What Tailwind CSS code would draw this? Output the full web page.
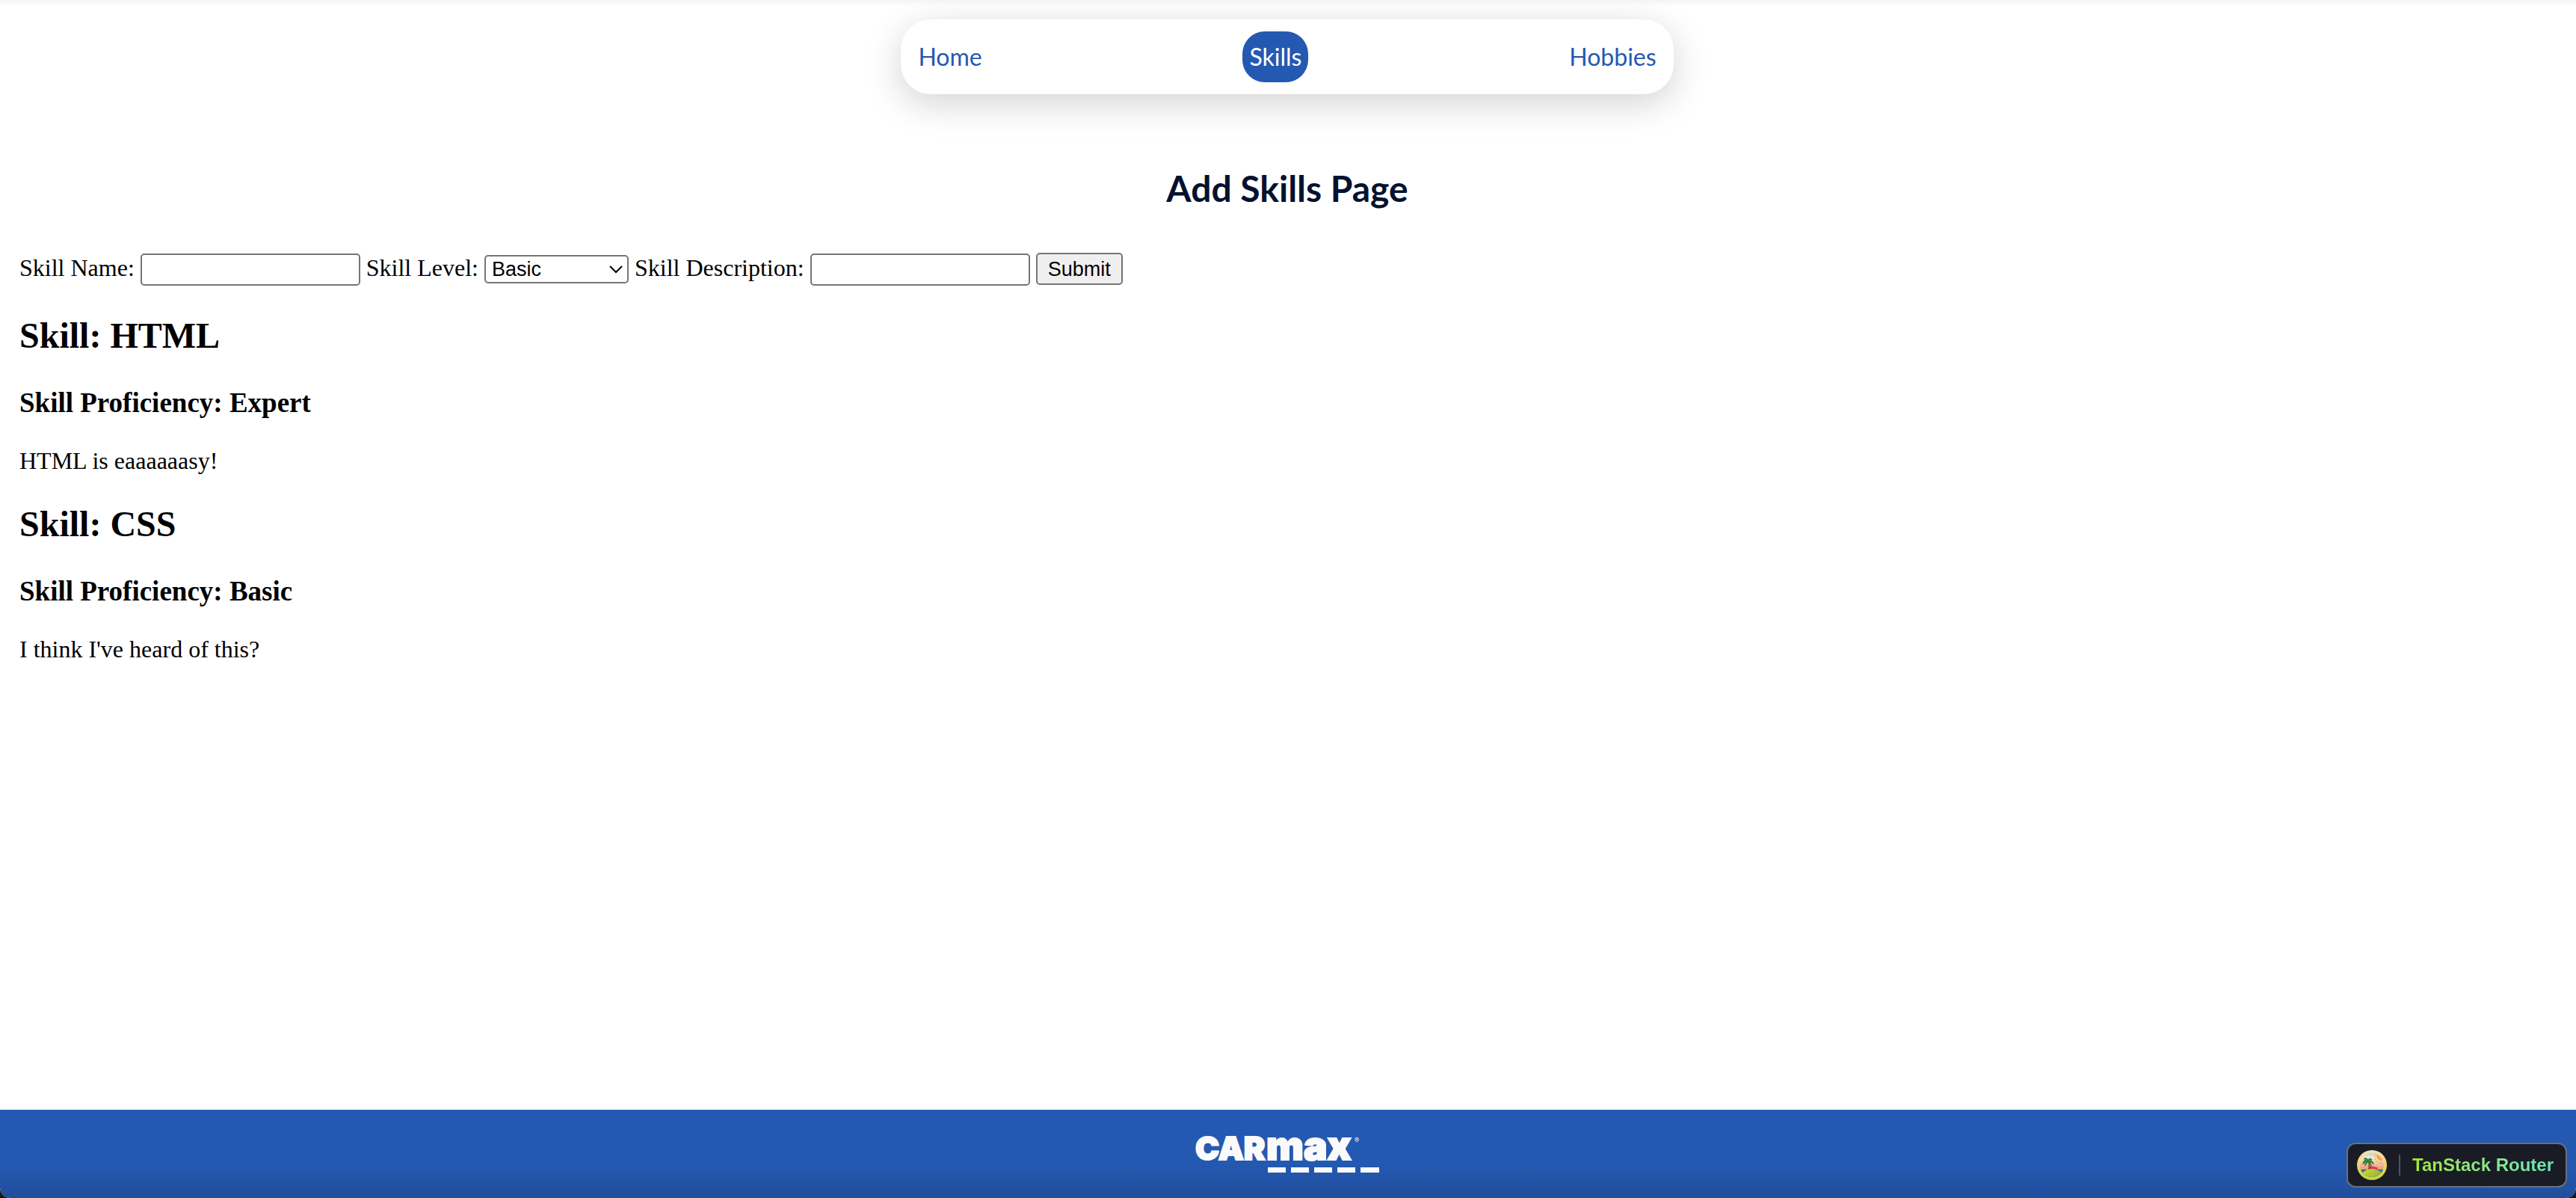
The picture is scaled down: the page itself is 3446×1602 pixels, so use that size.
<!DOCTYPE html>
<html lang="en">
<head>
<meta charset="utf-8">
<title>Skills</title>
<script src="https://cdn.jsdelivr.net/npm/@tailwindcss/browser@4"></script>
</head>
<body class="bg-[#15171a]">
<div class="relative flex min-h-screen flex-col overflow-hidden rounded-b-[14px] bg-white font-['Liberation_Serif',serif] text-[32px] leading-9 text-black">
  <div class="absolute inset-x-0 top-0 h-2 bg-linear-to-b from-black/4 to-transparent"></div>
  <header class="flex justify-center pt-[26px] pr-0.5">
    <nav class="flex w-[30%] min-w-[500px] items-center justify-between rounded-[40px] bg-white px-[14px] py-4 font-[Lato,sans-serif] leading-[68px] text-[#2459b2] shadow-[0_12px_48px_rgba(0,10,5,0.18)]">
      <a href="#home" class="rounded-[30px] px-[9px]">Home</a>
      <a href="#skills" class="rounded-[30px] bg-[#2459b2] px-[9px] text-white">Skills</a>
      <a href="#hobbies" class="rounded-[30px] px-[9px]">Hobbies</a>
    </nav>
  </header>
  <main class="flex-1 px-[26px]">
    <h1 class="mt-24 pr-0.5 text-center font-[Lato,sans-serif] text-5xl leading-[60px] font-bold text-[#04122f]">Add Skills Page</h1>
    <form class="mt-14 flex flex-wrap items-baseline gap-2">
      <label for="name">Skill Name:</label>
      <input id="name" type="text" class="h-[43px] w-[294px] rounded-[5px] border-2 border-[#767676] bg-white px-1 font-['Liberation_Sans',sans-serif] text-[27px] leading-8">
      <label for="level">Skill Level:</label>
      <span class="relative flex">
        <select id="level" class="h-[38px] w-[193px] appearance-none rounded-[5px] border-2 border-[#767676] bg-white px-2 font-['Liberation_Sans',sans-serif] text-[27px] leading-8"><option>Basic</option><option>Intermediate</option><option>Expert</option></select>
        <svg class="pointer-events-none absolute top-3 right-2 h-4 w-[18px]" viewBox="0 0 18 16" fill="none" stroke="#000" stroke-width="2"><path d="M1 3l8 8 8-8"/></svg>
      </span>
      <label for="description">Skill Description:</label>
      <input id="description" type="text" class="h-[43px] w-[294px] rounded-[5px] border-2 border-[#767676] bg-white px-1 font-['Liberation_Sans',sans-serif] text-[27px] leading-8">
      <button type="submit" class="h-[43px] rounded-[5px] border-2 border-[#767676] bg-[#efefef] px-[14px] font-['Liberation_Sans',sans-serif] text-[27px] leading-8">Submit</button>
    </form>
    <section class="mt-10">
      <h2 class="text-5xl leading-[54px] font-bold">Skill: HTML</h2>
      <h3 class="mt-[42px] text-[37px] leading-[42px] font-bold">Skill Proficiency: Expert</h3>
      <p class="mt-[38px]">HTML is eaaaaaasy!</p>
    </section>
    <section class="mt-10">
      <h2 class="text-5xl leading-[54px] font-bold">Skill: CSS</h2>
      <h3 class="mt-[42px] text-[37px] leading-[42px] font-bold">Skill Proficiency: Basic</h3>
      <p class="mt-[38px]">I think I've heard of this?</p>
    </section>
  </main>
  <footer class="relative flex h-[118px] justify-center bg-linear-to-b from-[#2459b2] from-60% to-[#214e9c] pt-4">
    <svg class="h-20 w-[248px]" viewBox="0 -20 248 80" fill="#fafafa" stroke="#fafafa" role="img" aria-label="CarMax">
      <g font-family="Inter, sans-serif" font-weight="900" stroke-width="2">
        <text x="0" y="31" font-size="43">CAR</text>
        <text x="95" y="31" font-size="53">max</text>
      </g>
      <text x="213" y="8" font-family="Inter, sans-serif" font-size="9" stroke="none">®</text>
      <g stroke="none">
        <rect x="97" y="41" width="24" height="7"/><rect x="128" y="41" width="24" height="7"/><rect x="159" y="41" width="24" height="7"/><rect x="190" y="41" width="24" height="7"/><rect x="221" y="41" width="25" height="7"/>
      </g>
    </svg>
    <button type="button" class="absolute right-3 bottom-3.5 flex h-[60px] items-center gap-4 rounded-xl border-2 border-[#667085] bg-[#191c24] pr-4 pl-3 font-['Liberation_Sans',sans-serif] text-2xl leading-8 font-bold">
      <svg class="size-10" viewBox="0 0 40 40" aria-hidden="true">
        <defs>
          <linearGradient id="ring" x1="0" y1="0" x2="0" y2="1"><stop offset="0" stop-color="#f3e3c0"/><stop offset=".5" stop-color="#f6d069"/><stop offset="1" stop-color="#b9d83e"/></linearGradient>
          <linearGradient id="sky" x1="0" y1="0" x2="0" y2="1"><stop offset="0" stop-color="#79cfe8"/><stop offset=".25" stop-color="#f3ecd0"/><stop offset=".65" stop-color="#ef9676"/></linearGradient>
          <linearGradient id="isle" x1="0" y1="0" x2="1" y2="1"><stop offset="0" stop-color="#dede3c"/><stop offset="1" stop-color="#6f9a2c"/></linearGradient>
          <clipPath id="disc"><circle cx="20" cy="20" r="16"/></clipPath>
        </defs>
        <circle cx="20" cy="20" r="20" fill="url(#ring)"/>
        <g clip-path="url(#disc)">
          <rect width="40" height="40" fill="url(#sky)"/>
          <circle cx="32" cy="9" r="8" fill="none" stroke="#f0a050" stroke-width="2" stroke-dasharray="1.5 2"/>
          <circle cx="32" cy="8" r="6" fill="#f6a83c"/>
          <rect y="26" width="40" height="14" fill="#15687e"/>
          <path d="M0 28h40M0 31h40" stroke="#5bb6bd" stroke-dasharray="3 2"/>
          <path d="M18 21l9 2 1 3H17z" fill="#d8365a"/>
          <path d="M14 14c2 4 2 8 1 13h3c0-5-1-9-3-13z" fill="#7b3a20"/>
          <path d="M14 14c-4-2-6 1-6 5 1-2 3-3 5-3-2 1-3 3-2 5 1-2 2-4 4-5 1 1 3 3 4 5 0-3-1-4-2-5 2 0 4 1 5 3 0-4-3-6-6-5 1-1 3-2 4-1-1-3-4-2-5 0-2-3-5-3-6-1 2 0 4 0 5 2z" fill="#35803c" stroke="#35803c"/>
          <ellipse cx="20" cy="35" rx="14" ry="10" fill="url(#isle)"/>
        </g>
      </svg>
      <span class="h-7 w-0.5 bg-[#475467]"></span>
      <span class="bg-linear-to-r from-[#a3e635] to-[#6ee7b7] bg-clip-text text-transparent">TanStack Router</span>
    </button>
  </footer>
</div>
</body>
</html>
